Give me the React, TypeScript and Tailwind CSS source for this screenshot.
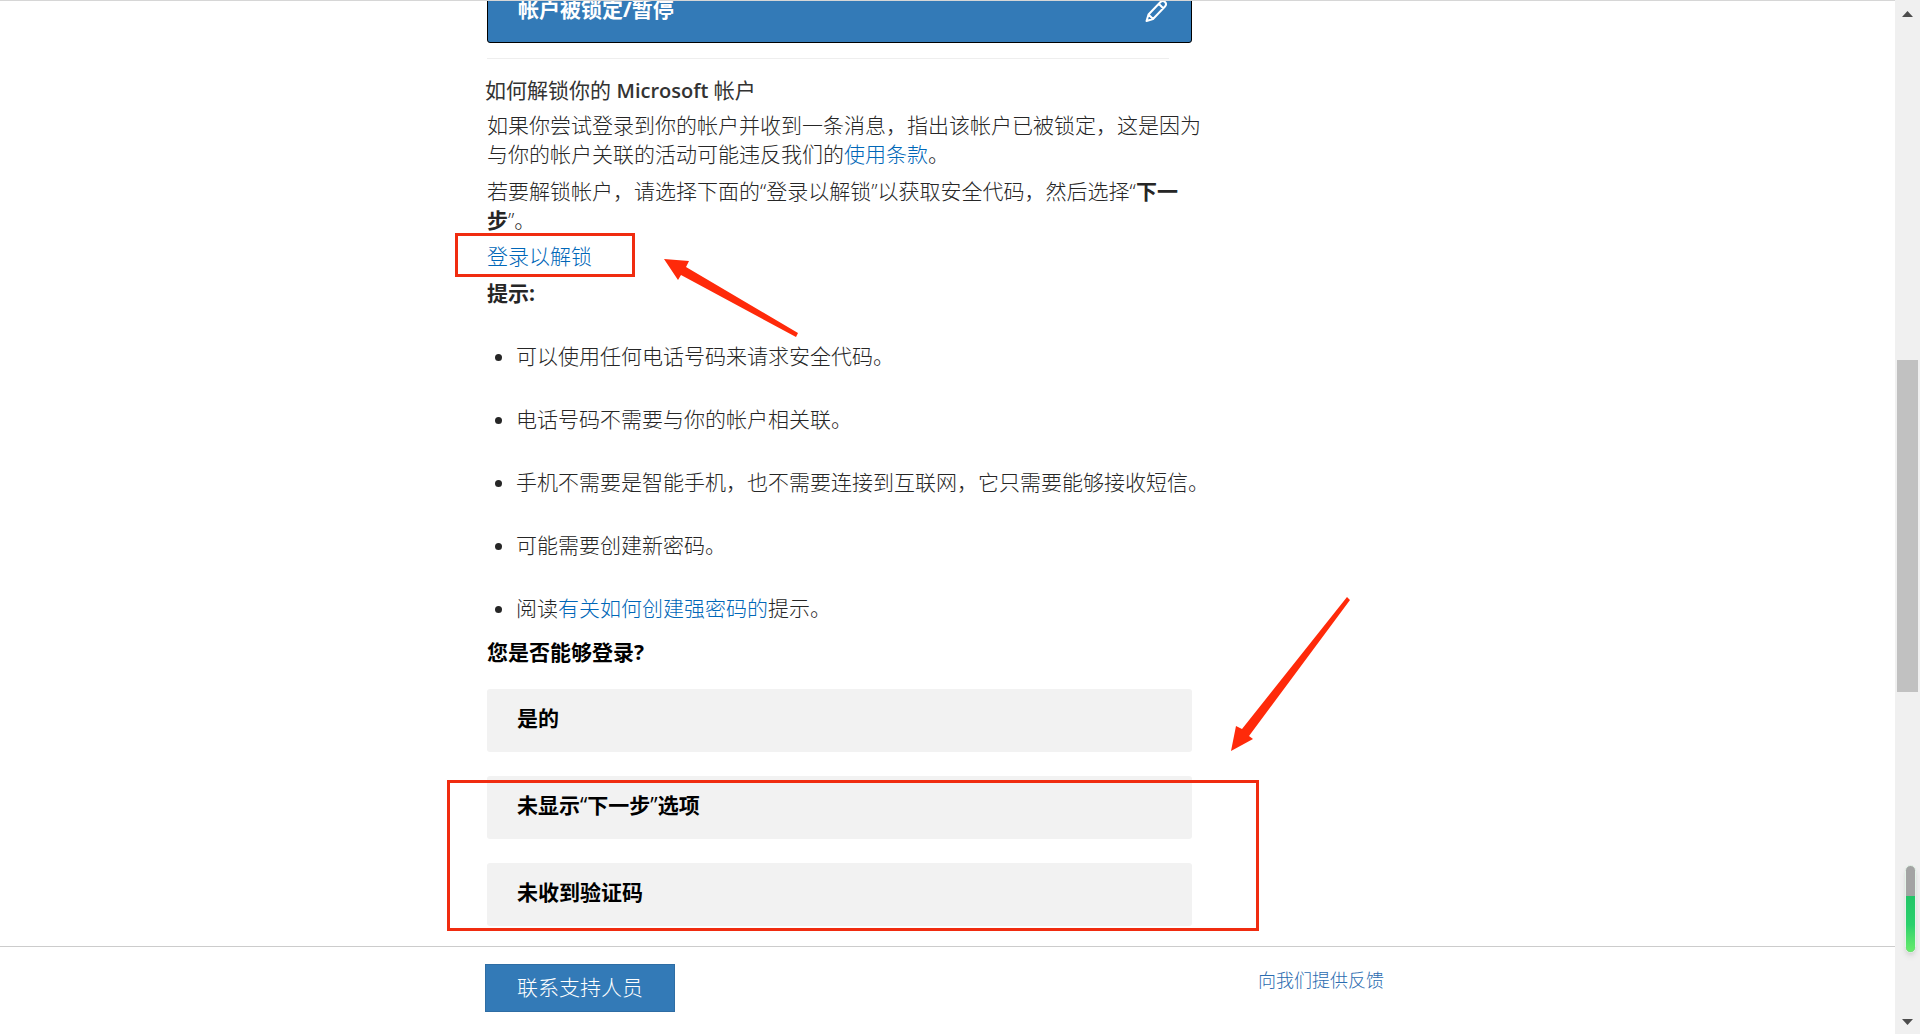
import type { ReactNode } from "react";

const answers = [
  { id: "yes", label: "是的" },
  {
    id: "no-next",
    label: (
      <>未显示<span className="font-normal">“</span>下一步<span className="font-normal">”</span>选项</>
    ),
  },
  { id: "no-code", label: "未收到验证码" },
];

function TextLink({ children }: { children: ReactNode }) {
  return (
    <a href="#" className="text-[#0067b8] hover:underline">{children}</a>
  );
}

function Tips() {
  return (
    <ul className="mt-[34px] space-y-[34px] list-disc pl-[29px]">
      <li>可以使用任何电话号码来请求安全代码。</li>
      <li>电话号码不需要与你的帐户相关联。</li>
      <li>手机不需要是智能手机，也不需要连接到互联网，它只需要能够接收短信。</li>
      <li>可能需要创建新密码。</li>
      <li>阅读<TextLink>有关如何创建强密码的</TextLink>提示。</li>
    </ul>
  );
}

/* Red arrows that point at the sign-in link and at the answers */
function Arrows() {
  return (
    <svg className="absolute left-0 top-0 overflow-visible pointer-events-none" width="925" height="940" viewBox="0 -20 925 940" fill="#ff2a0a">
      <path d="M179 259 L204 261 L201 267 L313 333 L311 337 L196 275 L193 280 Z" />
      <path d="M746 751 L751 726 L757 729 L862 597 L865 600 L764 736 L768 739 Z" />
    </svg>
  );
}

function ScrollBar() {
  return (
    <div className="relative w-[25px] shrink-0 bg-[#f0f0f0] flex flex-col items-center justify-between">
      <svg className="mt-[11px]" width="11" height="6" fill="#4d4d4d"><path d="M0 6 L5.5 0 L11 6 Z" /></svg>
      <div className="absolute top-[360px] left-[2px] right-[2px] h-[332px] bg-[#c1c1c1]" />
      <div className="absolute top-[865px] right-[4px] w-[11px] h-[88px] rounded-full overflow-hidden bg-[#a3a3a3] border border-[#e4f3e8] shadow-md">
        <div className="mt-[30px] h-[58px] bg-linear-to-b from-[#22c567] via-[#2ad16c] to-[#6bee6b]" />
      </div>
      <svg className="mb-[9px]" width="11" height="6" fill="#4d4d4d"><path d="M0 0 L11 0 L5.5 6 Z" /></svg>
    </div>
  );
}

export default function App() {
  return (
    <div className="h-screen flex bg-white text-[21px] leading-[29px] font-light text-[#262626] font-['Open_Sans','Noto_Sans_CJK_SC',sans-serif]">
      <div className="flex-1 min-w-0 flex flex-col border-t border-[#d6d6d6]">
        <main className="flex-1 min-h-0 overflow-hidden">
          <div className="relative w-full max-w-[925px] mx-auto pl-[2px]">
            <div className="max-w-[705px]">
              <button type="button" className="-mt-[21px] w-full h-[63px] flex items-start justify-between pt-[14px] pl-[30px] pr-[24px] rounded-[3px] border border-black bg-[#337ab7] text-white font-bold text-left">
                帐户被锁定/暂停
                <svg className="mt-1" width="22" height="24" viewBox="0 0 22 24" fill="none" stroke="white" strokeWidth="2" strokeLinejoin="round">
                  <path d="M1.5 22 L3.5 15.5 L15.5 3 Q18 1 20 3 Q22 5 20 7.500 L8 20 Z M14 5 L18.500 9.500 M3.500 15.500 L8 20" />
                </svg>
              </button>
              <hr className="mt-[15px] mr-[23px] border-[#eeeeee]" />
            </div>

            <div className="max-w-[730px]">
              <h2 className="mt-[17px] -ml-[2px] font-normal text-[#333333]">
                如何解锁你的 <span className="text-[20px] font-semibold">Microsoft</span> 帐户
              </h2>
              <p className="mt-[6px]">
                如果你尝试登录到你的帐户并收到一条消息，指出该帐户已被锁定，这是因为<br />与你的帐户关联的活动可能违反我们的<TextLink>使用条款</TextLink>。
              </p>
              <p className="mt-[8px]">
                若要解锁帐户，请选择下面的“登录以解锁”以获取安全代码，然后选择“<b className="font-bold">下一<br />步</b>”。
              </p>
              <p className="mt-[7px] relative">
                <TextLink>登录以解锁</TextLink>
                <span className="absolute -left-[32px] -top-[9px] w-[180px] h-[44px] border-3 border-[#f02c10] pointer-events-none" />
              </p>
              <p className="mt-[8px] font-bold">提示:</p>
              <Tips />
            </div>

            <h3 className="mt-[15px] font-bold text-black">您是否能够登录?</h3>
            <div className="relative mt-[22px] max-w-[705px] space-y-6">
              {answers.map(({ id, label }) => (
                <button key={id} type="button" className="block w-full h-[63px] pl-[30px] pb-1 rounded-[3px] bg-[#f2f2f2] text-black font-bold text-left">
                  {label}
                </button>
              ))}
              <span className="absolute -left-[40px] top-[91px] w-[812px] h-[151px] border-3 border-[#f02c10] pointer-events-none" />
            </div>
            <Arrows />
          </div>
        </main>

        <footer className="border-t border-[#cccccc]">
          <div className="w-full max-w-[925px] h-[87px] mx-auto flex items-start justify-between pt-[17px] pr-[26px]">
            <button type="button" className="h-[48px] px-[31px] pb-[2px] border border-[#2e6da4] bg-[#337ab7] text-white">联系支持人员</button>
            <a href="#" className="mt-[2px] text-[18px] text-[#2b6cb0]">向我们提供反馈</a>
          </div>
        </footer>
      </div>
      <ScrollBar />
    </div>
  );
}
